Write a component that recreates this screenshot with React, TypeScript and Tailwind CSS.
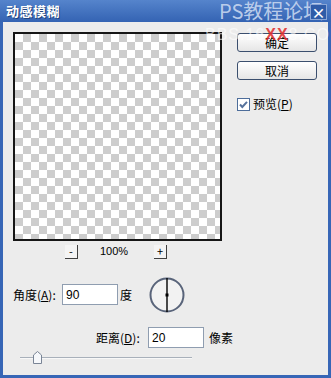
const cjk = { fontFamily: '"Noto Sans CJK SC", "Liberation Sans", sans-serif' };

const Checker = () => (
  <div
    className="h-[209px] w-[209px] border-2 border-[#161616] bg-white"
    style={{
      backgroundImage:
        "linear-gradient(45deg, #cdcdcd 25%, transparent 25%, transparent 75%, #cdcdcd 75%), linear-gradient(45deg, #cdcdcd 25%, transparent 25%, transparent 75%, #cdcdcd 75%)",
      backgroundSize: "16px 16px",
      backgroundPosition: "0 0, 8px 8px",
    }}
  />
);

const DialogButton = ({ label }: { label: string }) => (
  <button
    type="button"
    className="flex h-[19px] w-[80px] items-center justify-center rounded-[3px] border border-[#3b4f6e] bg-gradient-to-b from-white to-[#e6e6e6] text-[12px] leading-none text-black"
    style={cjk}
  >
    {label}
  </button>
);

const ZoomButton = ({ label }: { label: string }) => (
  <div className="flex h-[14px] w-[13px] items-center justify-center border-b border-r border-[#404040] bg-[#f4f4f4] text-[11px] leading-none text-black">
    {label}
  </div>
);

export default function App() {
  return (
    <div className="relative flex h-[378px] w-[331px] flex-col overflow-hidden bg-[#3766b6] px-[3px] pb-[3px]" style={cjk}>
      <div className="-mx-[3px] flex h-[22px] items-center bg-gradient-to-b from-[#5584cc] to-[#3463b3] px-[6px]">
        <span className="text-[13px] font-bold tracking-[0.5px] text-white [text-shadow:1px_1px_0_#23447d]">动感模糊</span>
      </div>

      <div className="relative flex-1 bg-[#ececec] pl-[10px] pt-[10px]">
        <div className="flex gap-[15px]">
          <Checker />
          <div className="flex flex-col pt-[1px]">
            <DialogButton label="确定" />
            <div className="mt-[9px]">
              <DialogButton label="取消" />
            </div>
            <div className="mt-[15px] flex items-center gap-[3px] text-[12px] text-black">
              <svg width="13" height="13" viewBox="0 0 13 13">
                <rect x="0.5" y="0.5" width="12" height="12" fill="#fff" stroke="#4d6d9a" />
                <path d="M3 6.5 L5.3 9 L10 3.8" fill="none" stroke="#56729c" strokeWidth="2" />
              </svg>
              <span>
                预览(<span className="underline">P</span>)
              </span>
            </div>
          </div>
        </div>

        <div className="mt-[3px] flex h-[15px] items-center">
          <div className="ml-[52px]">
            <ZoomButton label="-" />
          </div>
          <span className="ml-[22px] text-[11px] text-black" style={{ fontFamily: '"Liberation Sans", sans-serif' }}>
            100%
          </span>
          <div className="ml-[26px]">
            <ZoomButton label="+" />
          </div>
        </div>

        <div className="mt-[18px] flex h-[35px] items-center text-[12px] text-black">
          <span className="w-[49px]">
            角度(<span className="underline">A</span>):
          </span>
          <div
            className="flex h-[21px] w-[56px] items-center border border-[#8f9db0] bg-white pl-[3px] text-[12px]"
            style={{ fontFamily: '"Liberation Sans", sans-serif' }}
          >
            90
          </div>
          <span className="ml-[2px]">度</span>
          <svg className="ml-[17px]" width="36" height="36" viewBox="0 0 36 36">
            <circle cx="18" cy="18" r="16.5" fill="#f2f2f2" stroke="#59647a" strokeWidth="2" />
            <line x1="18" y1="1" x2="18" y2="35" stroke="#000" strokeWidth="1.4" />
            <rect x="16.5" y="16.5" width="3" height="3" fill="#000" />
          </svg>
        </div>

        <div className="ml-[83px] mt-[15px] flex h-[21px] items-center text-[12px] text-black">
          <span className="w-[52px]">
            距离(<span className="underline">D</span>):
          </span>
          <div
            className="flex h-[21px] w-[56px] items-center border border-[#8f9db0] bg-white pl-[3px] text-[12px]"
            style={{ fontFamily: '"Liberation Sans", sans-serif' }}
          >
            20
          </div>
          <span className="ml-[5px]">像素</span>
        </div>

        <div className="relative ml-[7px] mt-[3px] h-[14px] w-[172px]">
          <div className="absolute left-0 right-0 top-[6px] h-[2px] border-t border-[#a8b0ba] bg-[#f8f8f8]" />
          <svg className="absolute left-[13px] top-0" width="9" height="13" viewBox="0 0 9 13">
            <path d="M0.5 12.5 V4 L4.5 0.5 L8.5 4 V12.5 Z" fill="#f6f8fb" stroke="#7a8596" />
          </svg>
        </div>

        <div
          className="pointer-events-none absolute left-[202px] top-[5px] whitespace-nowrap text-[16px] leading-none tracking-[1px] text-white/60"
          style={{ fontFamily: '"Liberation Sans", sans-serif' }}
        >
          BBS.16<span className="font-bold text-[#e03030]/90">XX</span>8.COM
        </div>
      </div>

      <div className="pointer-events-none absolute left-[219px] top-[1px] whitespace-nowrap text-[20px] leading-none text-[#c9d8f0]/90">
        PS教程论坛
      </div>
      <div className="absolute right-[4px] top-[4px] flex h-[16px] w-[17px] items-center justify-center border border-[#8aa6d6] bg-[#2f5ca8] text-[14px] font-bold leading-none text-white">
        ×
      </div>
    </div>
  );
}
